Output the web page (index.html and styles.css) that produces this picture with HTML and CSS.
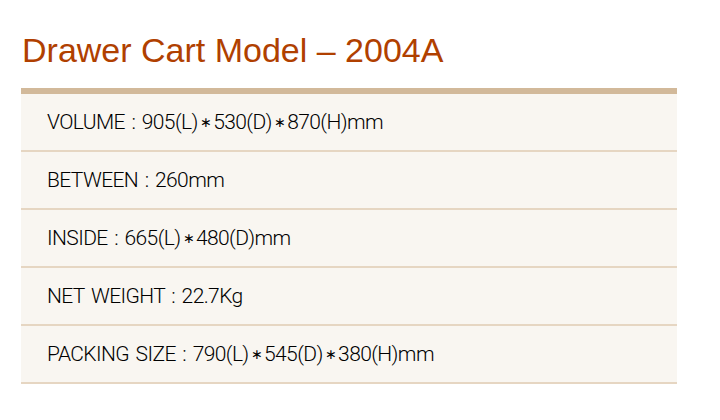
FILE: index.html
```html
<!DOCTYPE html>
<html>
<head>
<meta charset="utf-8">
<link rel="stylesheet" href="styles.css">
</head>
<body>
<div class="page">
  <h1 class="title">Drawer Cart Model – 2004A</h1>
  <ul class="spec">
    <li class="row">VOLUME : 905(L)<span class="star">∗</span>530(D)<span class="star">∗</span>870(H)mm</li>
    <li class="row">BETWEEN : 260mm</li>
    <li class="row">INSIDE : 665(L)<span class="star">∗</span>480(D)mm</li>
    <li class="row">NET WEIGHT : 22.7Kg</li>
    <li class="row">PACKING SIZE : 790(L)<span class="star">∗</span>545(D)<span class="star">∗</span>380(H)mm</li>
  </ul>
</div>
</body>
</html>
```

FILE: styles.css
```css
html, body {
  margin: 0;
  padding: 0;
  background: #ffffff;
}
.page {
  width: 656px;
  padding: 30px 0 0 21px;
}
.title {
  margin: 0 0 0 1px;
  font-family: "Liberation Sans", Arial, sans-serif;
  font-weight: normal;
  font-size: 34px;
  line-height: 40px;
  color: #b04000;
}
.spec {
  list-style: none;
  margin: 18px 0 0 0;
  padding: 0;
  border-top: 6px solid #d2b99a;
}
.row {
  height: 56px;
  display: flex;
  align-items: center;
  padding-left: 26px;
  background: #f9f6f1;
  border-bottom: 2px solid #e6d6c2;
  font-family: Roboto, "Liberation Sans", sans-serif;
  font-weight: 300;
  font-size: 21px;
  color: #000;
  letter-spacing: -0.6px;
  word-spacing: 2px;
  white-space: pre;
}
.star {
  font-size: 14px;
  padding: 0 2px;
}
```
